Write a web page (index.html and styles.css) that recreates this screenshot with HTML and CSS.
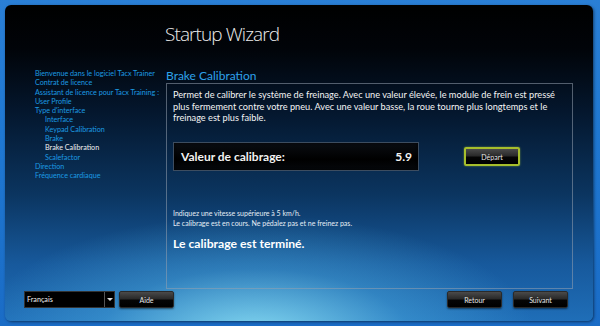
FILE: index.html
```html
<!DOCTYPE html>
<html>
<head>
    <title>Startup Wizard</title>
    <link rel="stylesheet" href="styles.css">
</head>
<body>
    <div class="window">
        <div class="header">
            <h1 class="title">Startup Wizard</h1>
        </div>

        <div class="main">
            <ul class="steps">
                <li>Bienvenue dans le logiciel Tacx Trainer</li>
                <li>Contrat de licence</li>
                <li>Assistant de licence pour Tacx Training :</li>
                <li>User Profile</li>
                <li>Type d'interface</li>
                <li class="sub">Interface</li>
                <li class="sub">Keypad Calibration</li>
                <li class="sub">Brake</li>
                <li class="sub current">Brake Calibration</li>
                <li class="sub">Scalefactor</li>
                <li>Direction</li>
                <li>Fréquence cardiaque</li>
            </ul>

            <div class="content">
                <h2 class="page-title">Brake Calibration</h2>
                <div class="panel">
                    <p class="intro">Permet de calibrer le système de freinage. Avec une valeur élevée, le module de frein est pressé plus fermement contre votre pneu. Avec une valeur basse, la roue tourne plus longtemps et le freinage est plus faible.</p>

                    <div class="calib-row">
                        <div class="calib-value">
                            <span>Valeur de calibrage:</span>
                            <span>5.9</span>
                        </div>
                        <button class="btn btn-start">Départ</button>
                    </div>

                    <div class="spacer"></div>

                    <p class="note">Indiquez une vitesse supérieure à 5 km/h.</p>
                    <p class="note">Le calibrage est en cours. Ne pédalez pas et ne freinez pas.</p>
                    <p class="done">Le calibrage est terminé.</p>
                </div>
            </div>
        </div>

        <div class="footer">
            <div class="lang">
                <span>Français</span>
                <span class="lang-arrow"></span>
            </div>
            <button class="btn">Aide</button>
            <div class="spacer"></div>
            <button class="btn">Retour</button>
            <button class="btn">Suivant</button>
        </div>
    </div>
</body>
</html>
```

FILE: styles.css
```css
body {
    margin: 0;
    padding: 5px 0 0 5px;
    height: 326px;
    box-sizing: border-box;
    overflow: hidden;
    background: linear-gradient(180deg, #2a7fd6 0%, #1f78d2 40%, #1a6cc6 100%);
    font-family: Lato, Arial, sans-serif;
    color: white;
}

/* Окно мастера */
.window {
    width: 588px;
    height: 316px;
    box-sizing: border-box;
    border-radius: 6px;
    display: flex;
    flex-direction: column;
    padding-bottom: 13px;
    background:
        radial-gradient(ellipse 280px 120px at 250px 330px, rgba(150, 235, 250, 0.85), rgba(90, 190, 235, 0.35) 55%, rgba(40, 120, 200, 0) 100%),
        linear-gradient(180deg, #000 0%, #010409 14%, #04172e 34%, #0b3560 60%, #17599c 82%, #1f6eb8 100%);
    box-shadow: 1px 1px 3px rgba(0, 0, 0, 0.5);
}

.header {
    height: 64px;
    padding-left: 160px;
    box-sizing: border-box;
}

.title {
    margin: 0;
    padding-top: 16px;
    font-family: "Open Sans", Arial, sans-serif;
    font-weight: 300;
    font-size: 19px;
    letter-spacing: -0.9px;
    color: #ececec;
}

.main {
    height: 220px;
    display: flex;
    padding-left: 30px;
}

.steps {
    list-style: none;
    margin: 0;
    padding: 0;
    width: 131px;
    font-size: 7.2px;
    line-height: 9.3px;
    color: #1c9be2;
    white-space: nowrap;
}

.steps .sub {
    padding-left: 10px;
}

.steps .current {
    color: #f0f0f0;
}

.content {
    width: 407px;
    display: flex;
    flex-direction: column;
}

.page-title {
    margin: 0;
    height: 14px;
    font-size: 12px;
    font-weight: 400;
    line-height: 13px;
    color: #2ea2ea;
}

.panel {
    flex: 1;
    border: 1px solid rgba(150, 160, 175, 0.55);
    display: flex;
    flex-direction: column;
    padding: 5px 7px 37px 6px;
}

.intro {
    margin: 0;
    font-size: 9.2px;
    line-height: 11.7px;
    color: #f4f4f4;
}

.calib-row {
    display: flex;
    align-items: center;
    margin-top: 18px;
}

.calib-value {
    width: 246px;
    height: 29px;
    box-sizing: border-box;
    display: flex;
    justify-content: space-between;
    align-items: center;
    padding: 0 6px 0 7px;
    background: linear-gradient(180deg, #0a0d12 0%, #000 60%, #05080c 100%);
    border: 1px solid #3d4d60;
    box-shadow: inset 0 0 3px rgba(0, 0, 0, 0.8);
    font-weight: 700;
    font-size: 12px;
    color: #f2f2f2;
}

.btn {
    width: 55px;
    height: 17px;
    padding: 0;
    border: 1px solid #2a2a2a;
    border-radius: 2px;
    background: linear-gradient(180deg, #4a4a4a 0%, #2a2a2a 45%, #050505 55%, #000 100%);
    color: #e8e8e8;
    font-family: Lato, Arial, sans-serif;
    font-size: 7px;
    cursor: pointer;
    box-shadow: 0 1px 2px rgba(0, 0, 0, 0.5);
}

.btn-start {
    width: 56px;
    height: 19px;
    margin-left: 45px;
    border: 2px solid #a6be2c;
    box-shadow: 0 0 2px rgba(190, 220, 60, 0.6);
}

.spacer {
    flex: 1;
}

.note {
    margin: 0;
    font-size: 7px;
    line-height: 10px;
    color: #e6eef6;
}

.done {
    margin: 8px 0 0 0;
    font-size: 12.2px;
    font-weight: 700;
    color: #fff;
}

.footer {
    display: flex;
    align-items: center;
    gap: 4px;
    margin-top: 2px;
    height: 17px;
    padding: 0 25px 0 19px;
}

.footer .btn + .spacer + .btn {
    margin-right: 7px;
}

.lang {
    width: 91px;
    height: 17px;
    box-sizing: border-box;
    display: flex;
    align-items: center;
    justify-content: space-between;
    padding-left: 2px;
    background: #000;
    border: 1px solid #333;
    font-size: 7.2px;
    color: #eee;
}

.lang-arrow {
    width: 9px;
    height: 100%;
    border-left: 1px solid #555;
    position: relative;
}

.lang-arrow::after {
    content: "";
    position: absolute;
    left: 2px;
    top: 6px;
    border-left: 3px solid transparent;
    border-right: 3px solid transparent;
    border-top: 3px solid #ddd;
}
```
